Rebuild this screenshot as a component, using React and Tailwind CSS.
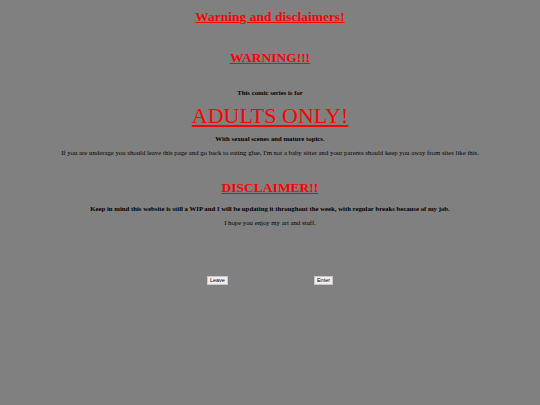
export default function App() {
  return (
    <div className="min-h-[405px] w-full bg-[#808080] text-center text-black" style={{ fontFamily: '"Liberation Serif", serif' }}>
      <div className="pt-[9px]">
        <h1 className="text-[13.5px] leading-[16px] font-bold text-[#ff0000] underline">Warning and disclaimers!</h1>
        <h2 className="mt-[25px] text-[13.5px] leading-[16px] font-bold text-[#ff0000] underline">WARNING!!!</h2>
        <p className="mt-[23px] text-[6.75px] leading-[8px] font-bold">This comic series is for</p>
        <p className="mt-[6px] text-[22px] leading-[26px] text-[#ff0000] underline">ADULTS ONLY!</p>
        <p className="mt-[6px] text-[6.75px] leading-[8px] font-bold">With sexual scenes and mature topics.</p>
        <p className="mt-[6px] text-[6.75px] leading-[8px]">If you are underage you should leave this page and go back to eating glue, I'm not a baby sitter and your parents should keep you away from sites like this.</p>
        <h2 className="mt-[23px] text-[13.5px] leading-[16px] font-bold text-[#ff0000] underline">DISCLAIMER!!</h2>
        <p className="mt-[9px] text-[6.75px] leading-[8px] font-bold">Keep in mind this website is still a WIP and I will be updating it throughout the week, with regular breaks because of my job.</p>
        <p className="mt-[6px] text-[6.75px] leading-[8px]">I hope you enjoy my art and stuff.</p>
        <div className="mt-[49px] flex justify-center gap-[86px]" style={{ fontFamily: '"Liberation Sans", sans-serif' }}>
          <button className="h-[9px] border border-[#c8c8c8] bg-[#efefef] px-[2px] text-[5.5px] leading-[7px]">Leave</button>
          <button className="h-[9px] border border-[#c8c8c8] bg-[#efefef] px-[2px] text-[5.5px] leading-[7px]">Enter</button>
        </div>
      </div>
    </div>
  );
}
